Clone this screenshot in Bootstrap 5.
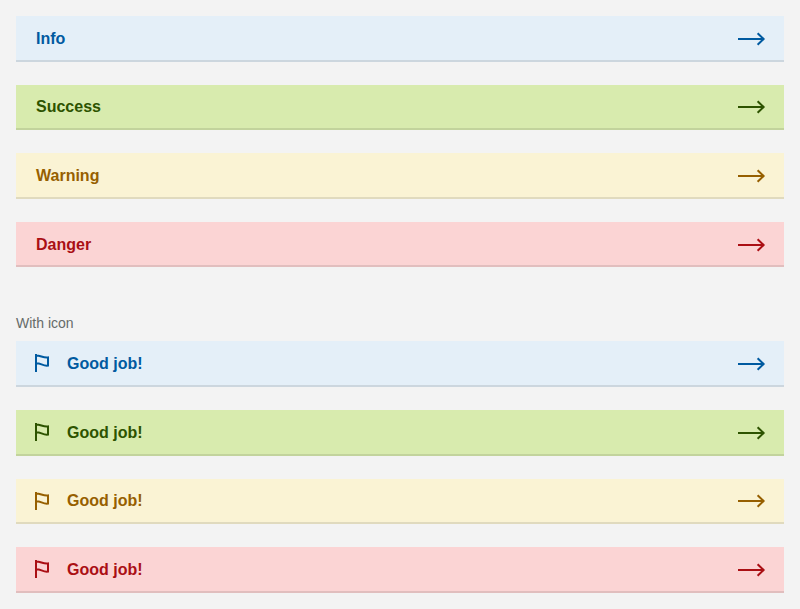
<!DOCTYPE html>
<html lang="en">
<head>
<meta charset="utf-8">
<meta name="viewport" content="width=device-width, initial-scale=1">
<title>Banners</title>
<link href="https://cdn.jsdelivr.net/npm/bootstrap@5.3.0/dist/css/bootstrap.min.css" rel="stylesheet">
<style>
body { background: #f3f3f3; font-family: "Liberation Sans", Arial, sans-serif; }
.banner-stack { gap: 23px; }
.banner { height: 45.6px; padding: 0 18px 0 20px; font-size: 16px; line-height: 24px; box-shadow: inset 0 -2px rgba(0,0,0,.1); }
.banner svg { fill: none; stroke: currentColor; stroke-width: 2; flex: none; }
.flag-icon { margin: .4px 15px 0 -4px; }
.banner-info { background: #e4eff8; color: #005aa0; }
.banner-success { background: #d8ebae; color: #2d5300; }
.banner-warning { background: #faf3d4; color: #965f00; }
.banner-danger { background: #fbd4d4; color: #aa0f14; }
.section-label { margin: 45.6px 0 7.4px; font-size: 14px; line-height: 21px; color: #666b69; }
</style>
</head>
<body>
<svg class="d-none" aria-hidden="true">
  <symbol id="arrow" viewBox="0 0 28 16"><path d="M0 8H26M19.6 2.2L25.6 8L19.6 13.8"/></symbol>
  <symbol id="flag" viewBox="0 0 20 20"><path d="M4 0V18M4 1.4C8.5 1.2 11 4.1 16 3.4V11.6C11 12.3 8.5 8.8 4 9.2"/></symbol>
</svg>
<main class="p-3">
  <div class="banner-stack d-flex flex-column">
    <a class="banner banner-info d-flex align-items-center justify-content-between fw-bold text-decoration-none" href="#">Info<svg width="28" height="16"><use href="#arrow"/></svg></a>
    <a class="banner banner-success d-flex align-items-center justify-content-between fw-bold text-decoration-none" href="#">Success<svg width="28" height="16"><use href="#arrow"/></svg></a>
    <a class="banner banner-warning d-flex align-items-center justify-content-between fw-bold text-decoration-none" href="#">Warning<svg width="28" height="16"><use href="#arrow"/></svg></a>
    <a class="banner banner-danger d-flex align-items-center justify-content-between fw-bold text-decoration-none" href="#">Danger<svg width="28" height="16"><use href="#arrow"/></svg></a>
  </div>
  <p class="section-label">With icon</p>
  <div class="banner-stack d-flex flex-column">
    <a class="banner banner-info d-flex align-items-center fw-bold text-decoration-none" href="#"><svg class="flag-icon" width="20" height="20"><use href="#flag"/></svg>Good job!<svg class="ms-auto" width="28" height="16"><use href="#arrow"/></svg></a>
    <a class="banner banner-success d-flex align-items-center fw-bold text-decoration-none" href="#"><svg class="flag-icon" width="20" height="20"><use href="#flag"/></svg>Good job!<svg class="ms-auto" width="28" height="16"><use href="#arrow"/></svg></a>
    <a class="banner banner-warning d-flex align-items-center fw-bold text-decoration-none" href="#"><svg class="flag-icon" width="20" height="20"><use href="#flag"/></svg>Good job!<svg class="ms-auto" width="28" height="16"><use href="#arrow"/></svg></a>
    <a class="banner banner-danger d-flex align-items-center fw-bold text-decoration-none" href="#"><svg class="flag-icon" width="20" height="20"><use href="#flag"/></svg>Good job!<svg class="ms-auto" width="28" height="16"><use href="#arrow"/></svg></a>
  </div>
</main>
<script src="https://cdn.jsdelivr.net/npm/bootstrap@5.3.0/dist/js/bootstrap.bundle.min.js"></script>
</body>
</html>
